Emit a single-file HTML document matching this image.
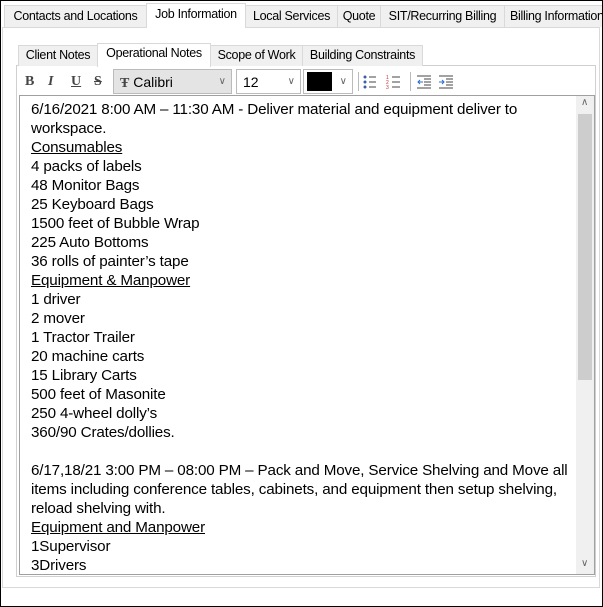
<!DOCTYPE html>
<html><head><style>
*{margin:0;padding:0;box-sizing:border-box}
body{width:603px;height:607px;background:#fff;font-family:"Liberation Sans",sans-serif;font-size:12px;color:#000;position:relative;overflow:hidden}
.frame{position:absolute;left:0;top:0;width:603px;height:607px;border:1px solid #000}
.tab{position:absolute;top:5px;height:22px;background:#f0f0f0;border:1px solid #d9d9d9;border-bottom:none;font-size:12.5px;line-height:20px;text-align:center;letter-spacing:-0.3px}
.tab.act{top:3px;height:25px;background:#fff;z-index:2}
.panel{position:absolute;left:2px;top:27px;width:598px;height:561px;border:1px solid #d9d9d9;background:#fff}
.itab{position:absolute;top:45px;height:21px;background:#f0f0f0;border:1px solid #d9d9d9;border-bottom:none;line-height:19px;font-size:12.5px;text-align:center;letter-spacing:-0.3px}
.itab.act{top:43px;height:24px;background:#fff;z-index:2}
.ipanel{position:absolute;left:16px;top:65px;width:580px;height:512px;border:1px solid #d0d0d0}
.tb{position:absolute;font-family:"Liberation Serif",serif;font-weight:bold;font-size:14px;color:#444;top:74px}
.combo{position:absolute;top:69px;height:25px;border:1px solid #bbb;background:#e4e4e4;font-size:14px;line-height:24px;padding-left:6px}
.combo .ar{position:absolute;right:5px;top:0;color:#666;font-size:10px}
.editor{position:absolute;left:19px;top:95px;width:576px;height:480px;border:1px solid #a0a0a0;overflow:hidden}
.text{position:absolute;left:11px;top:4px;font-family:"Liberation Sans",sans-serif;font-size:15.2px;line-height:19px;letter-spacing:-0.15px;white-space:nowrap}
.u{text-decoration:underline}
.sb{position:absolute;left:556px;top:0;width:18px;height:478px;background:#f0f0f0}
.thumb{position:absolute;left:2px;top:18px;width:14px;height:266px;background:#cdcdcd}
</style></head><body>
<div class="panel"></div>
<div class="tab" style="left:4px;width:143px">Contacts and Locations</div>
<div class="tab act" style="left:146px;width:100px">Job Information</div>
<div class="tab" style="left:245px;width:93px">Local Services</div>
<div class="tab" style="left:337px;width:44px">Quote</div>
<div class="tab" style="left:380px;width:125px">SIT/Recurring Billing</div>
<div class="tab" style="left:504px;width:104px;text-align:left;padding-left:5px">Billing Information</div>
<div class="ipanel"></div>
<div class="itab" style="left:18px;width:80px">Client Notes</div>
<div class="itab act" style="left:97px;width:114px">Operational Notes</div>
<div class="itab" style="left:210px;width:93px">Scope of Work</div>
<div class="itab" style="left:302px;width:121px">Building Constraints</div>
<div class="tb" style="left:25px">B</div>
<div class="tb" style="left:48px;font-style:italic">I</div>
<div class="tb" style="left:71px;text-decoration:underline">U</div>
<div class="tb" style="left:94px;text-decoration:line-through">S</div>
<div class="combo" style="left:113px;width:119px"><span style="font-family:'Liberation Serif',serif;font-weight:bold;color:#444">Ŧ</span> Calibri<span class="ar">∨</span></div>
<div class="combo" style="left:236px;width:65px;background:#fff">12<span class="ar">∨</span></div>
<div class="combo" style="left:303px;width:50px;background:#fff;padding:0"><div style="position:absolute;left:3px;top:2px;width:25px;height:19px;background:#000"></div><span class="ar">∨</span></div>
<div style="position:absolute;left:358px;top:72px;width:1px;height:19px;background:#bbb"></div>
<svg style="position:absolute;left:362px;top:74px" width="40" height="16"><g fill="#3a5fa8"><circle cx="3" cy="3" r="1.5"/><circle cx="3" cy="8" r="1.5"/><circle cx="3" cy="13" r="1.5"/></g><g stroke="#444"><path d="M7 3h7M7 8h7M7 13h7M30 3h8M30 8h8M30 13h8"/></g><g fill="#c03030" font-size="5" font-family="Liberation Sans"><text x="24" y="5">1</text><text x="24" y="10">2</text><text x="24" y="15">3</text></g></svg>
<div style="position:absolute;left:410px;top:72px;width:1px;height:19px;background:#bbb"></div>
<svg style="position:absolute;left:416px;top:74px" width="40" height="16"><g stroke="#444"><path d="M1 2h14M8 5h7M8 8h7M8 11h7M1 14h14M23 2h14M30 5h7M30 8h7M30 11h7M23 14h14"/></g><path d="M7 8H2M4 6l-2 2 2 2M23 8h5M26 6l2 2-2 2" stroke="#2a6bd0" fill="none"/></svg>
<div class="editor">
<div class="text">6/16/2021 8:00 AM – 11:30 AM - Deliver material and equipment deliver to<br>workspace.<br><span class="u">Consumables</span><br>4 packs of labels<br>48 Monitor Bags<br>25 Keyboard Bags<br>1500 feet of Bubble Wrap<br>225 Auto Bottoms<br>36 rolls of painter’s tape<br><span class="u">Equipment &amp; Manpower </span><br>1 driver<br>2 mover<br>1 Tractor Trailer<br>20 machine carts<br>15 Library Carts<br>500 feet of Masonite<br>250 4-wheel dolly’s<br>360/90 Crates/dollies.<br><br>6/17,18/21 3:00 PM – 08:00 PM – Pack and Move, Service Shelving and Move all<br>items including conference tables, cabinets, and equipment then setup shelving,<br>reload shelving with.<br><span class="u">Equipment and Manpower</span><br>1Supervisor<br>3Drivers</div>
<div class="sb"><div style="position:absolute;left:5px;top:1px;font-size:10px;color:#666">∧</div><div class="thumb"></div><div style="position:absolute;left:5px;top:462px;font-size:10px;color:#666">∨</div></div>
</div>
<div class="frame"></div>
</body></html>
